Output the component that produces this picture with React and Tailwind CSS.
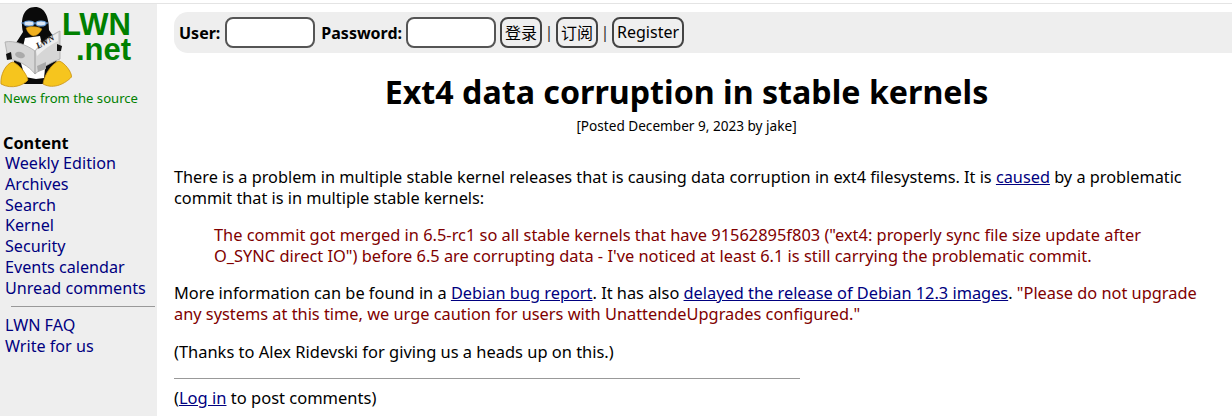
const navTop = ['Weekly Edition', 'Archives', 'Search', 'Kernel', 'Security', 'Events calendar', 'Unread comments']
const navBottom = ['LWN FAQ', 'Write for us']

function Penguin() {
  return (
    <svg width="73" height="89" viewBox="0 0 73 89" className="shrink-0 -mt-[4px]">
      {/* body */}
      <path d="M23 32 C20 18 24 7 35 7 C45 7 49 17 49 30 L57 42 L56 76 L46 84 L24 84 L14 70 L14 46 Z" fill="#0a0a0a" />
      <path d="M25 38 L40 36 L46 60 L44 78 L36 79 L25 77 L20 60 Z" fill="#fff" />
      {/* glasses */}
      <path d="M21 23 L48 23" stroke="#6a9fd8" strokeWidth="1" />
      <ellipse cx="29" cy="23.500" rx="5" ry="2.500" fill="#dfe9f5" stroke="#6a9fd8" strokeWidth="1.200" />
      <ellipse cx="41" cy="23.500" rx="5" ry="2.500" fill="#dfe9f5" stroke="#6a9fd8" strokeWidth="1.200" />
      {/* beak */}
      <path d="M26 28 C30 26 37 26 42 29 C40 33 37 36 33 36 C30 35 27 32 26 28 Z" fill="#f0b020" stroke="#a87810" strokeWidth="0.500" />
      {/* newspaper */}
      <path d="M5 42 C14 40 27 45 35 51 C41 43 51 35 60 31 L60 59 C52 62 43 67 35 74 C29 66 18 60 8 59 Z" fill="#d6d6d6" stroke="#a8a8a8" strokeWidth="0.800" />
      <path d="M35 51 L35 74" stroke="#9a9a9a" strokeWidth="1" />
      <path d="M36 51 C42 44 50 37 58 33 L58 41 C50 45 43 50 37 56 Z" fill="#eeeeee" />
      <text x="38" y="49" fontSize="9" fontWeight="700" fontStyle="italic" fill="#222" transform="rotate(-30 38 49)" fontFamily="Liberation Serif, serif">LWN</text>
      <ellipse cx="20" cy="55" rx="5" ry="3" fill="#aaaaaa" transform="rotate(15 20 55)" />
      <path d="M37 66 L46 62 L46 69 L38 72 Z" fill="#aaaaaa" />
      {/* flippers */}
      <path d="M6 54 L11 52 L12 59 L7 60 Z" fill="#111" />
      <path d="M57 44 L62 46 L61 51 L57 51 Z" fill="#111" />
      {/* feet */}
      <path d="M1 84 C0 75 6 63 13 62 C18 64 26 72 28 80 C24 85 12 90 1 84 Z" fill="#f6c51e" stroke="#c89010" strokeWidth="0.800" />
      <path d="M43 84 C44 75 52 63 59 61 C64 62 72 72 71.500 77 C66 83 54 90 43 84 Z" fill="#f6c51e" stroke="#c89010" strokeWidth="0.800" />
    </svg>
  )
}

export default function App() {
  return (
    <div className="w-[1232px] h-[416px] overflow-hidden bg-white font-['Noto_Sans','Open_Sans',sans-serif] text-[16.25px] leading-[21px] text-black">
      <div className="h-[4px] border-b border-[#e4e4e4]" />
      <div className="flex h-[412px]">
        {/* Sidebar */}
        <aside className="w-[157px] shrink-0 bg-[#eeeeee]">
          <div className="flex h-[84px]">
            <Penguin />
            <div className="font-['Liberation_Sans',sans-serif] font-bold text-[#008000] text-[31px] leading-[25px] pt-[8px] -ml-[11px]">
              <div>LWN</div>
              <div className="pl-[14px]">.net</div>
            </div>
          </div>
          <div className="pl-[3px] pt-[1px] text-[13.100px] leading-[18px] text-[#008000]">News from the source</div>

          <div className="mt-[26px] pl-[3px] font-bold leading-[20px]">Content</div>
          <nav className="pl-[5px] text-[16.150px] leading-[20.800px]">
            {navTop.map((item) => (
              <a key={item} className="block text-[#000080]">{item}</a>
            ))}
          </nav>
          <hr className="ml-[11px] mr-[2px] mt-[7px] mb-[8px] border-t border-[#999999]" />
          <nav className="pl-[5px] text-[16.150px] leading-[21px]">
            {navBottom.map((item) => (
              <a key={item} className="block text-[#000080]">{item}</a>
            ))}
          </nav>
        </aside>

        {/* Main */}
        <main className="flex-1 pl-[17px] pt-[8px]">
          <form className="flex items-center h-[41px] bg-[#eeeeee] rounded-l-[14px] pl-[5px]">
            <label className="font-bold text-[16px] pt-[2px] mr-[5px]">User:</label>
            <input className="w-[90px] h-[31px] bg-white rounded-[8px] border-2 border-[#555555] mr-[6px]" />
            <label className="font-bold text-[16px] pt-[2px] mr-[4px]">Password:</label>
            <input className="w-[90px] h-[31px] bg-white rounded-[8px] border-2 border-[#555555] mr-[4px]" />
            <button type="button" className="h-[31px] w-[42px] rounded-[8px] border-2 border-[#444444] bg-[#efefef] font-['Noto_Sans_CJK_SC',sans-serif] text-[16px]">登录</button>
            <span className="w-[14px] text-center text-[#333333]">|</span>
            <button type="button" className="h-[31px] w-[42px] rounded-[8px] border-2 border-[#444444] bg-[#efefef] font-['Noto_Sans_CJK_SC',sans-serif] text-[16px]">订阅</button>
            <span className="w-[14px] text-center text-[#333333]">|</span>
            <button type="button" className="h-[31px] w-[72px] rounded-[8px] border-2 border-[#444444] bg-[#efefef] text-[16px]">Register</button>
          </form>

          <div className="mr-[33px]">
            <h1 className="mt-[17px] text-center text-[32.200px] leading-[44px] font-bold">Ext4 data corruption in stable kernels</h1>
            <div className="mt-[3px] text-center text-[13.600px] leading-[17px]">[Posted December 9, 2023 by jake]</div>

            <p className="mt-[33px] text-[16.300px]">
              There is a problem in multiple stable kernel releases that is causing data corruption in ext4 filesystems. It is <a className="text-[#000080] underline">caused</a> by a problematic commit that is in multiple stable kernels:
            </p>
            <p className="mt-[15px] mx-[40px] text-[16.400px] text-[#800000]">
              The commit got merged in 6.5-rc1 so all stable kernels that have 91562895f803 ("ext4: properly sync file size update after O_SYNC direct IO") before 6.5 are corrupting data - I've noticed at least 6.1 is still carrying the problematic commit.
            </p>
            <p className="mt-[17px] text-[16.350px]">
              More information can be found in a <a className="text-[#000080] underline">Debian bug report</a>. It has also <a className="text-[#000080] underline">delayed the release of Debian 12.3 images</a>. <span className="text-[#800000]">"Please do not upgrade any systems at this time, we urge caution for users with UnattendeUpgrades configured."</span>
            </p>
            <p className="mt-[16px] text-[16.450px]">(Thanks to Alex Ridevski for giving us a heads up on this.)</p>
            <hr className="mt-[16px] w-[626px] border-t border-[#999999]" />
            <p className="mt-[8px] text-[16.500px]">(<a className="text-[#000080] underline">Log in</a> to post comments)</p>
          </div>
        </main>
      </div>
    </div>
  )
}
